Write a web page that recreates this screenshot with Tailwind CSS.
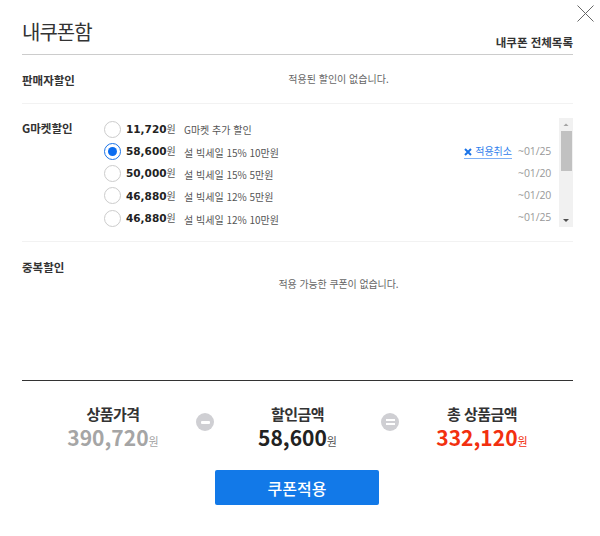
<!DOCTYPE html>
<html lang="ko">
<head>
  <meta charset="UTF-8" />
  <title>내쿠폰함</title>
  <script src="https://cdn.jsdelivr.net/npm/@tailwindcss/browser@4"></script>
</head>
<body class="bg-white font-['Noto_Sans_CJK_KR',sans-serif] text-[#333]">
  <div class="relative w-[600px] h-[536px] overflow-hidden pl-[22px] pr-[27px]">
    <!-- close -->
    <button class="absolute left-[577px] top-[5px] w-[17px] h-[17px]">
      <svg width="17" height="17" viewBox="0 0 17 17" fill="none" stroke="#666" stroke-width="1"><path d="M0.5 0.5L16.5 16.5M16.5 0.5L0.5 16.5" /></svg>
    </button>

    <!-- header -->
    <div class="flex justify-between items-end h-[55px] border-b border-[#ccc] pb-[4px]">
      <h1 class="text-[20px] leading-[32px] tracking-[-1px] font-normal text-[#333] mb-[2px]">내쿠폰함</h1>
      <a class="text-[11.5px] leading-[16px] font-bold text-[#333]">내쿠폰 전체목록</a>
    </div>

    <!-- seller -->
    <div class="flex h-[49px] border-b border-[#f2f2f2] pt-[16px]">
      <div class="w-[82px] text-[11.5px] leading-[18px] font-bold">판매자할인</div>
      <p class="flex-1 text-center text-[10px] leading-[16px] text-[#666]">적용된 할인이 없습니다.</p>
    </div>

    <!-- gmarket -->
    <div class="flex h-[138px] border-b border-[#f2f2f2] pt-[15px]">
      <div class="w-[82px] text-[11.5px] leading-[18px] font-bold">G마켓할인</div>
      <div class="flex-1 h-[109px] flex">
        <ul class="flex-1 -mt-[1px]">
          <li class="flex items-center h-[22.25px]">
            <span class="w-[17px] h-[17px] rounded-full border border-[#ccc] bg-white"></span>
            <span class="ml-[5px] w-[58px] text-[10.5px] font-['DejaVu_Sans',sans-serif] font-bold text-[#222] whitespace-nowrap">11,720<span class="font-['Noto_Sans_CJK_KR',sans-serif] font-normal text-[10px] text-[#555]">원</span></span>
            <span class="text-[10px] text-[#555]">G마켓 추가 할인</span>
          </li>
          <li class="flex items-center h-[22.25px]">
            <span class="flex items-center justify-center w-[17px] h-[17px] rounded-full border border-[#1a73e8] bg-white"><span class="w-[9px] h-[9px] rounded-full bg-[#0a6cf0]"></span></span>
            <span class="ml-[5px] w-[58px] text-[10.5px] font-['DejaVu_Sans',sans-serif] font-bold text-[#222] whitespace-nowrap">58,600<span class="font-['Noto_Sans_CJK_KR',sans-serif] font-normal text-[10px] text-[#555]">원</span></span>
            <span class="mt-[2px] text-[10px] text-[#555]">설 빅세일 15% 10만원</span>
            <a class="ml-auto flex items-center gap-[3px] border-b border-[#7fb0f5] text-[10px] leading-[14px] text-[#2f80ed]">
              <svg width="8" height="8" viewBox="0 0 8 8" class="mt-[2px]"><path d="M1 1L7 7M7 1L1 7" stroke="#1a73e8" stroke-width="2" /></svg>적용취소
            </a>
            <span class="ml-[6px] w-[32px] text-[10.5px] tracking-[-0.1px] font-['Open_Sans',sans-serif] text-[#999] whitespace-nowrap">~01/25</span>
          </li>
          <li class="flex items-center h-[22.25px]">
            <span class="w-[17px] h-[17px] rounded-full border border-[#ccc] bg-white"></span>
            <span class="ml-[5px] w-[58px] text-[10.5px] font-['DejaVu_Sans',sans-serif] font-bold text-[#222] whitespace-nowrap">50,000<span class="font-['Noto_Sans_CJK_KR',sans-serif] font-normal text-[10px] text-[#555]">원</span></span>
            <span class="mt-[2px] text-[10px] text-[#555]">설 빅세일 15% 5만원</span>
            <span class="ml-auto w-[32px] text-[10.5px] tracking-[-0.1px] font-['Open_Sans',sans-serif] text-[#999] whitespace-nowrap">~01/20</span>
          </li>
          <li class="flex items-center h-[22.25px]">
            <span class="w-[17px] h-[17px] rounded-full border border-[#ccc] bg-white"></span>
            <span class="ml-[5px] w-[58px] text-[10.5px] font-['DejaVu_Sans',sans-serif] font-bold text-[#222] whitespace-nowrap">46,880<span class="font-['Noto_Sans_CJK_KR',sans-serif] font-normal text-[10px] text-[#555]">원</span></span>
            <span class="mt-[2px] text-[10px] text-[#555]">설 빅세일 12% 5만원</span>
            <span class="ml-auto w-[32px] text-[10.5px] tracking-[-0.1px] font-['Open_Sans',sans-serif] text-[#999] whitespace-nowrap">~01/20</span>
          </li>
          <li class="flex items-center h-[22.25px]">
            <span class="w-[17px] h-[17px] rounded-full border border-[#ccc] bg-white"></span>
            <span class="ml-[5px] w-[58px] text-[10.5px] font-['DejaVu_Sans',sans-serif] font-bold text-[#222] whitespace-nowrap">46,880<span class="font-['Noto_Sans_CJK_KR',sans-serif] font-normal text-[10px] text-[#555]">원</span></span>
            <span class="mt-[2px] text-[10px] text-[#555]">설 빅세일 12% 10만원</span>
            <span class="ml-auto w-[32px] text-[10.5px] tracking-[-0.1px] font-['Open_Sans',sans-serif] text-[#999] whitespace-nowrap">~01/25</span>
          </li>
        </ul>
        <!-- scrollbar -->
        <div class="ml-[9px] -mt-[1px] w-[14px] h-[109px] bg-[#f1f1f1] flex flex-col items-center">
          <svg width="14" height="13" viewBox="0 0 14 13"><path d="M4.5 8L7 5.5L9.5 8Z" fill="#a3a3a3" /></svg>
          <div class="w-[11px] h-[40px] bg-[#c1c1c1]"></div>
          <svg width="14" height="13" viewBox="0 0 14 13" class="mt-auto"><path d="M4 5L7 8L10 5Z" fill="#505050" /></svg>
        </div>
      </div>
    </div>

    <!-- duplicate -->
    <div class="flex h-[139px] border-b border-[#333] pt-[16px]">
      <div class="w-[82px] text-[11.5px] leading-[18px] font-bold">중복할인</div>
      <p class="flex-1 text-center mt-[18px] text-[10px] tracking-[-0.1px] leading-[16px] text-[#666]">적용 가능한 쿠폰이 없습니다.</p>
    </div>

    <!-- summary -->
    <div class="flex justify-center items-start pt-[22px]">
      <div class="w-[166px] text-center">
        <div class="text-[15px] leading-[22px] font-bold tracking-[-0.5px] text-[#333]">상품가격</div>
        <div class="text-[21px] leading-[24px] font-bold text-[#a5a5a5] whitespace-nowrap">390,720<span class="text-[11px] font-normal">원</span></div>
      </div>
      <div class="mt-[10px] w-[18px] h-[18px] rounded-full bg-[#cfcfd3] flex items-center justify-center"><span class="w-[9px] h-[3px] bg-white rounded-[1px]"></span></div>
      <div class="w-[167px] text-center">
        <div class="text-[15px] leading-[22px] font-bold tracking-[-0.5px] text-[#333]">할인금액</div>
        <div class="text-[21px] leading-[24px] font-bold text-[#222] whitespace-nowrap">58,600<span class="text-[11px] font-normal text-[#555]">원</span></div>
      </div>
      <div class="mt-[10px] w-[18px] h-[18px] rounded-full bg-[#cfcfd3] flex flex-col items-center justify-center gap-[2px]"><span class="w-[9px] h-[2px] bg-white"></span><span class="w-[9px] h-[2px] bg-white"></span></div>
      <div class="w-[166px] text-center">
        <div class="text-[15px] leading-[22px] font-bold tracking-[-0.5px] text-[#333]">총 상품금액</div>
        <div class="text-[21px] leading-[24px] font-bold text-[#f2300f] whitespace-nowrap">332,120<span class="text-[11px] font-normal">원</span></div>
      </div>
    </div>

    <!-- apply -->
    <div class="flex justify-center mt-[17px] pr-[1px]">
      <button class="w-[164px] h-[35px] rounded-[2px] bg-[#1279e8] text-white text-[16px] font-medium">쿠폰적용</button>
    </div>
  </div>
</body>
</html>
